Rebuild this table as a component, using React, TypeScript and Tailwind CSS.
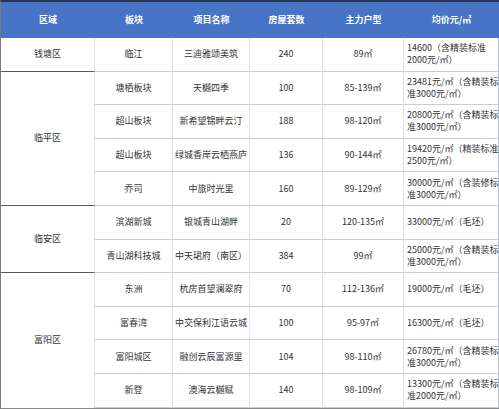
const groups: { region: string; rows: [string, string, string, string, string[]][] }[] = [
  {
    region: '钱塘区',
    rows: [['临江', '三迪雅颂美筑', '240', '89㎡', ['14600（含精装标准', '2000元/㎡）']]],
  },
  {
    region: '临平区',
    rows: [
      ['塘栖板块', '天樾四季', '100', '85-139㎡', ['23481元/㎡（含精装标', '准3000元/㎡）']],
      ['超山板块', '新希望锦畔云汀', '188', '98-120㎡', ['20800元/㎡（含精装标', '准3000元/㎡）']],
      ['超山板块', '绿城香岸云栖燕庐', '136', '90-144㎡', ['19420元/㎡（精装标准', '2500元/㎡）']],
      ['乔司', '中旅时光里', '160', '89-129㎡', ['30000元/㎡（含装修标', '准3000元/㎡）']],
    ],
  },
  {
    region: '临安区',
    rows: [
      ['滨湖新城', '银城青山湖畔', '20', '120-135㎡', ['33000元/㎡（毛坯）']],
      ['青山湖科技城', '中天珺府（南区）', '384', '99㎡', ['25000元/㎡（含精装标', '准3000元/㎡）']],
    ],
  },
  {
    region: '富阳区',
    rows: [
      ['东洲', '杭房首望澜翠府', '70', '112-136㎡', ['19000元/㎡（毛坯）']],
      ['富春湾', '中交保利江语云城', '100', '95-97㎡', ['16300元/㎡（毛坯）']],
      ['富阳城区', '融创云辰富源里', '104', '98-110㎡', ['26780元/㎡（含精装标', '准3000元/㎡）']],
      ['新登', '澳海云樾赋', '140', '98-109㎡', ['13300元/㎡（含精装标', '准2000元/㎡）']],
    ],
  },
]

const headers = ['区域', '板块', '项目名称', '房屋套数', '主力户型', '均价元/㎡']

export default function App() {
  return (
    <div
      className="w-[499px] h-[409px] overflow-hidden bg-white text-[#333] text-[9px] leading-[12px]"
      style={{ fontFamily: '"Noto Sans CJK SC", "Noto Sans", sans-serif' }}
    >
      <div className="border-t-2 border-[#26334f] border-l border-l-[#7d7d7d] border-b-2 border-b-[#8a8a8a]">
        <table className="w-full table-fixed border-separate border-spacing-0">
          <colgroup>
            <col className="w-[94px]" />
            <col className="w-[78px]" />
            <col className="w-[77px]" />
            <col className="w-[73px]" />
            <col className="w-[81px]" />
            <col />
          </colgroup>
          <thead>
            <tr className="h-[36px] bg-[#4774c7] text-white font-bold">
              {headers.map((h) => (
                <th key={h} className="font-bold text-center align-middle">
                  {h}
                </th>
              ))}
            </tr>
          </thead>
          <tbody>
            {groups.map((g, gi) =>
              g.rows.map((r, ri) => (
                <tr key={`${gi}-${ri}`} className="h-[33.6px]">
                  {ri === 0 && (
                    <td
                      rowSpan={g.rows.length}
                      className={`text-center align-middle border-r border-r-[#dfe3ea] ${
                        gi < groups.length - 1 ? 'border-b border-b-[#5a5a5a]' : ''
                      }`}
                    >
                      {g.region}
                    </td>
                  )}
                  {r.slice(0, 4).map((c, ci) => (
                    <td
                      key={ci}
                      className="text-center align-middle whitespace-nowrap border-r border-r-[#dfe3ea] border-b border-b-[#c6cdd8]"
                    >
                      {c as string}
                    </td>
                  ))}
                  <td className="align-middle pl-[3px] whitespace-nowrap border-r border-r-[#b8bcc4] border-b border-b-[#c6cdd8]">
                    {r[4].map((line, li) => (
                      <div key={li}>{line}</div>
                    ))}
                  </td>
                </tr>
              ))
            )}
          </tbody>
        </table>
      </div>
    </div>
  )
}
